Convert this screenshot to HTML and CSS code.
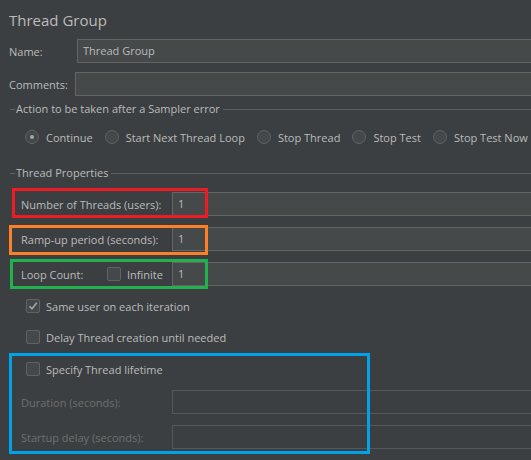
FILE: index.html
```html
<!DOCTYPE html>
<html>
<head>
<meta charset="utf-8">
<link rel="stylesheet" href="styles.css">
</head>
<body>
<div class="panel">
  <div class="title">Thread Group</div>

  <div class="field name-row">
    <span class="field-label">Name:</span>
    <div class="input">Thread Group</div>
  </div>
  <div class="field comments-row">
    <span class="field-label">Comments:</span>
    <div class="input"></div>
  </div>

  <div class="group-title action-title">
    <span class="dash"></span><span class="gt-text">Action to be taken after a Sampler error</span><span class="rule"></span>
  </div>
  <div class="radios">
    <div class="radio-item"><span class="radio on"></span><span>Continue</span></div>
    <div class="radio-item"><span class="radio"></span><span>Start Next Thread Loop</span></div>
    <div class="radio-item"><span class="radio"></span><span>Stop Thread</span></div>
    <div class="radio-item"><span class="radio"></span><span>Stop Test</span></div>
    <div class="radio-item"><span class="radio"></span><span>Stop Test Now</span></div>
  </div>

  <div class="group-title props-title">
    <span class="dash"></span><span class="gt-text">Thread Properties</span><span class="rule"></span>
  </div>

  <div class="prop-row row-threads">
    <span class="prop-label">Number of Threads (users):</span>
    <div class="input prop-input">1</div>
    <div class="mark mark-red"></div>
  </div>
  <div class="prop-row row-ramp">
    <span class="prop-label">Ramp-up period (seconds):</span>
    <div class="input prop-input">1</div>
    <div class="mark mark-orange"></div>
  </div>
  <div class="prop-row row-loop">
    <span class="prop-label loop-label">Loop Count:</span>
    <span class="check loop-check"></span>
    <span class="infinite">Infinite</span>
    <div class="input prop-input">1</div>
    <div class="mark mark-green"></div>
  </div>

  <div class="check-row same-row">
    <span class="check checked">
      <svg width="12" height="12" viewBox="0 0 12 12"><path d="M2.5 6.2 L5 8.8 L9.8 2.8" fill="none" stroke="#a6a6a6" stroke-width="1.6"/></svg>
    </span>
    <span>Same user on each iteration</span>
  </div>
  <div class="check-row delay-row">
    <span class="check"></span>
    <span>Delay Thread creation until needed</span>
  </div>

  <div class="lifetime">
    <div class="check-row">
      <span class="check"></span>
      <span>Specify Thread lifetime</span>
    </div>
    <div class="prop-row disabled dur-row">
      <span class="prop-label">Duration (seconds):</span>
      <div class="input prop-input"></div>
    </div>
    <div class="prop-row disabled startup-row">
      <span class="prop-label">Startup delay (seconds):</span>
      <div class="input prop-input"></div>
    </div>
    <div class="mark mark-blue"></div>
  </div>
</div>
</body>
</html>
```

FILE: styles.css
```css
html, body {
  margin: 0;
  padding: 0;
  background: #3c3f41;
  overflow: hidden;
}
body {
  width: 531px;
  height: 460px;
  font-family: "Open Sans", "Noto Sans", sans-serif;
  font-size: 11px;
  color: #bbbbbb;
}
.panel {
  position: relative;
  padding-top: 10px;
}
.title {
  height: 20px;
  line-height: 20px;
  font-size: 15px;
  padding-left: 9px;
}
.field {
  display: flex;
  align-items: center;
  height: 24px;
  margin-top: 9px;
  padding-left: 9px;
}
.field-label {
  flex: none;
}
.name-row .field-label { width: 68px; }
.comments-row .field-label { width: 66px; }
.input {
  flex: 1;
  box-sizing: border-box;
  height: 24px;
  background: #45494a;
  border: 1px solid #646464;
  border-right: none;
  padding-left: 5px;
  line-height: 22px;
  white-space: nowrap;
}
.group-title {
  display: flex;
  align-items: center;
  height: 14px;
  padding-left: 10px;
}
.group-title .dash {
  width: 5px;
  height: 1px;
  background: #5e6060;
}
.group-title .gt-text {
  padding: 0 3px 0 1px;
  line-height: 14px;
}
.group-title .rule {
  flex: 1;
  height: 1px;
  background: #5e6060;
}
.action-title { margin-top: 6px; }
.radios {
  display: flex;
  align-items: center;
  height: 16px;
  margin-top: 13px;
  padding-left: 25px;
  gap: 12px;
  white-space: nowrap;
}
.radio-item {
  display: flex;
  align-items: center;
  gap: 7px;
}
.radio {
  box-sizing: border-box;
  width: 14px;
  height: 14px;
  border: 1px solid #626262;
  border-radius: 50%;
  background: #43494a;
  display: flex;
  align-items: center;
  justify-content: center;
}
.radio.on::after {
  content: "";
  width: 4px;
  height: 4px;
  border-radius: 50%;
  background: #a6a6a6;
}
.props-title { margin-top: 21px; }
.prop-row {
  position: relative;
  display: flex;
  align-items: center;
  height: 24px;
  padding-left: 21px;
}
.row-threads { margin-top: 12px; }
.row-ramp, .row-loop { margin-top: 11px; }
.prop-label {
  flex: none;
  width: 151px;
  white-space: nowrap;
}
.loop-label { width: 86px; }
.loop-check { margin-right: 6px; }
.infinite { width: 45px; }
.prop-input {
  flex: 1;
}
.check {
  box-sizing: border-box;
  flex: none;
  width: 14px;
  height: 14px;
  border: 1px solid #626262;
  border-radius: 2px;
  background: #43494a;
  display: flex;
  align-items: center;
  justify-content: center;
}
.check-row {
  display: flex;
  align-items: center;
  height: 14px;
  padding-left: 26px;
  gap: 6px;
  white-space: nowrap;
}
.same-row { margin-top: 13px; }
.delay-row { margin-top: 17px; }
.lifetime {
  position: relative;
  margin-top: 18px;
}
.dur-row { margin-top: 14px; }
.startup-row { margin-top: 11px; }
.disabled { color: #6f6f6f; }
.disabled .input {
  background: transparent;
  border-color: #555758;
}
.mark {
  position: absolute;
  box-sizing: border-box;
  border: 3px solid;
  pointer-events: none;
}
.mark-red {
  border-color: #ed1c24;
  top: -4px; left: 12px; width: 196px; height: 30px;
}
.mark-orange {
  border-color: #ff7f27;
  top: -2px; left: 9px; width: 199px; height: 30px;
}
.mark-green {
  border-color: #22b14c;
  top: -3px; left: 10px; width: 198px; height: 30px;
}
.mark-blue {
  border-color: #00a2e8;
  top: -9px; left: 9px; width: 361px; height: 101px;
}
```
